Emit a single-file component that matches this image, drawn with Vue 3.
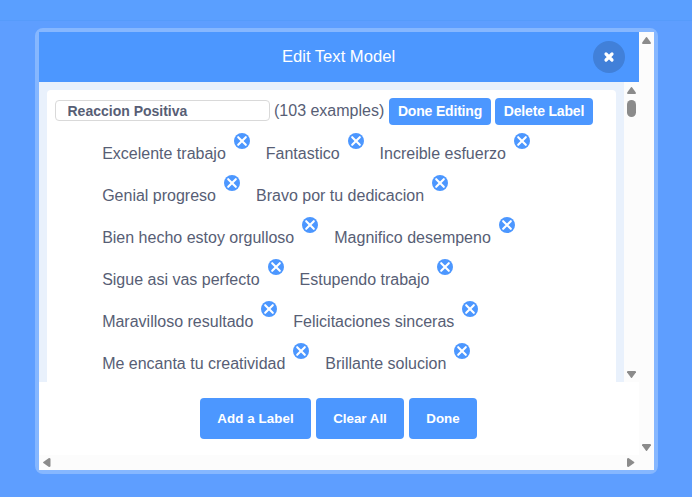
<script setup>
const rows = [
  ['Excelente trabajo', 'Fantastico', 'Increible esfuerzo'],
  ['Genial progreso', 'Bravo por tu dedicacion'],
  ['Bien hecho estoy orgulloso', 'Magnifico desempeno'],
  ['Sigue asi vas perfecto', 'Estupendo trabajo'],
  ['Maravilloso resultado', 'Felicitaciones sinceras'],
  ['Me encanta tu creatividad', 'Brillante solucion'],
]
</script>

<template>
  <div class="page">
    <div class="strip"></div>
    <div class="modal">
      <div class="main">
        <header class="header">
          <span class="title">Edit Text Model</span>
          <button class="close" aria-label="Close">
            <svg width="12" height="12" viewBox="0 0 12 12"><path d="M3 3L9 9M9 3L3 9" stroke="#fff" stroke-width="3.2" stroke-linecap="round" /></svg>
          </button>
        </header>
        <div class="scroller">
          <div class="content">
            <section class="card">
              <div class="label-row">
                <input class="name" type="text" value="Reaccion Positiva" />
                <span class="count">(103 examples)</span>
                <button class="btn small edit">Done Editing</button>
                <button class="btn small delete">Delete Label</button>
              </div>
              <div class="examples">
                <div v-for="(row, i) in rows" :key="i" class="row">
                  <div v-for="item in row" :key="item" class="example">
                    <span class="text">{{ item }}</span>
                    <svg class="remove" width="16" height="16" viewBox="0 0 16 16">
                      <circle cx="8" cy="8" r="8" fill="#4c97ff" />
                      <path d="M4.2 4.2L11.8 11.8M11.8 4.2L4.2 11.8" stroke="#fff" stroke-width="2.1" stroke-linecap="round" />
                    </svg>
                  </div>
                </div>
              </div>
            </section>
          </div>
          <div class="vbar inner">
            <svg width="9" height="7" viewBox="0 0 9 7"><path d="M4 .3Q4.5 -.1 5 .3L9 5.8Q9 7 8 7H1Q0 7 0 5.8Z" fill="#8b8b8b" /></svg>
            <div class="thumb"></div>
            <svg class="down" width="9" height="7" viewBox="0 0 9 7"><path d="M4 6.7Q4.5 7.1 5 6.7L9 1.2Q9 0 8 0H1Q0 0 0 1.2Z" fill="#8b8b8b" /></svg>
          </div>
        </div>
        <footer class="footer">
          <button class="btn add">Add a Label</button>
          <button class="btn clear">Clear All</button>
          <button class="btn done">Done</button>
        </footer>
      </div>
      <div class="vbar outer">
        <svg width="9" height="7" viewBox="0 0 9 7"><path d="M4 .3Q4.5 -.1 5 .3L9 5.8Q9 7 8 7H1Q0 7 0 5.8Z" fill="#8b8b8b" /></svg>
        <svg class="down" width="9" height="7" viewBox="0 0 9 7"><path d="M4 6.7Q4.5 7.1 5 6.7L9 1.2Q9 0 8 0H1Q0 0 0 1.2Z" fill="#8b8b8b" /></svg>
      </div>
      <div class="hbar">
        <svg width="8" height="9" viewBox="0 0 8 9"><path d="M.3 4Q-.1 4.5 .3 5L6 9Q7.5 9 7.5 8V1Q7.5 0 6 0Z" fill="#8b8b8b" /></svg>
        <svg width="8" height="9" viewBox="0 0 8 9"><path d="M7.2 4Q7.6 4.5 7.2 5L1.5 9Q0 9 0 8V1Q0 0 1.5 0Z" fill="#8b8b8b" /></svg>
      </div>
      <div class="corner"></div>
    </div>
  </div>
</template>

<style>
body { margin: 0; overflow: hidden; }
</style>

<style scoped>
.page, .page * { box-sizing: border-box; }
.page {
  width: 692px;
  height: 497px;
  background: #5e9eff;
  font-family: "Liberation Sans", Arial, sans-serif;
  font-size: 16px;
  color: #575e75;
}
.strip { height: 21px; background: #5a9fff; border-bottom: 1px solid #569bfb; }
.modal {
  width: 623px;
  height: 446px;
  margin: 7px 0 0 35px;
  border: 4px solid #86b7ff;
  border-radius: 8px;
  background: #fcfcfc;
  display: grid;
  grid-template-columns: 600px 15px;
  grid-template-rows: 423px 15px;
}
.main { display: flex; flex-direction: column; background: #fff; }
.header {
  height: 50px;
  background: #4c97ff;
  color: #fff;
  display: grid;
  grid-template-columns: 46px 1fr 46px;
  align-items: center;
}
.title { grid-column: 2; text-align: center; font-size: 16.6px; padding-right: 1px; }
button { font-family: inherit; border: 0; padding: 0; }
.close {
  width: 32px;
  height: 32px;
  border-radius: 50%;
  background: #4180d9;
  display: flex;
  align-items: center;
  justify-content: center;
}
.scroller { height: 300px; display: flex; }
.content { width: 585px; padding: 8px 8px 0; background: #e9f1fc; display: flex; }
.card { width: 569px; background: #fff; border-radius: 4px 4px 0 0; padding: 8px; }
.label-row { height: 27px; display: flex; align-items: center; }
.name {
  width: 215px;
  height: 21px;
  margin: 0 4px 2px 0;
  padding: 0 11px 0 11.5px;
  border: 1px solid #d9d9d9;
  border-radius: 4px;
  background: #fff;
  color: #575e75;
  font: bold 14px "Liberation Sans", Arial, sans-serif;
}
.count { width: 115px; white-space: nowrap; padding-bottom: 2px; }
.btn { background: #4c97ff; color: #fff; border-radius: 4px; font-size: 13.333px; font-weight: bold; white-space: nowrap; }
.small { height: 27px; font-size: 14px; letter-spacing: -0.18px; padding-bottom: 1px; }
.edit { width: 102px; margin-right: 4px; }
.delete { width: 98px; }
.examples { padding: 8px 0 0 47.15px; }
.row { height: 42px; display: flex; gap: 16px; }
.example { display: flex; align-items: flex-start; gap: 8px; }
.text { line-height: 18px; margin-top: 12px; white-space: nowrap; }
.remove { flex: none; }
.vbar { width: 15px; background: #fcfcfc; display: flex; flex-direction: column; align-items: center; padding: 5px 0 4px; }
.vbar .down { margin-top: auto; }
.thumb { width: 9px; height: 17px; border-radius: 5px; background: #8b8b8b; margin-top: 6px; }
.footer { height: 73px; padding: 16px 0 0 161px; display: flex; gap: 5px; }
.footer .btn { height: 41px; }
.footer .add { width: 111px; letter-spacing: 0.1px; }
.clear { width: 88px; }
.done { width: 68px; }
.hbar { width: 600px; background: #fcfcfc; display: flex; align-items: center; justify-content: space-between; padding: 0 4px; }
.corner { background: #fcfcfc; }
svg { display: block; }
</style>
